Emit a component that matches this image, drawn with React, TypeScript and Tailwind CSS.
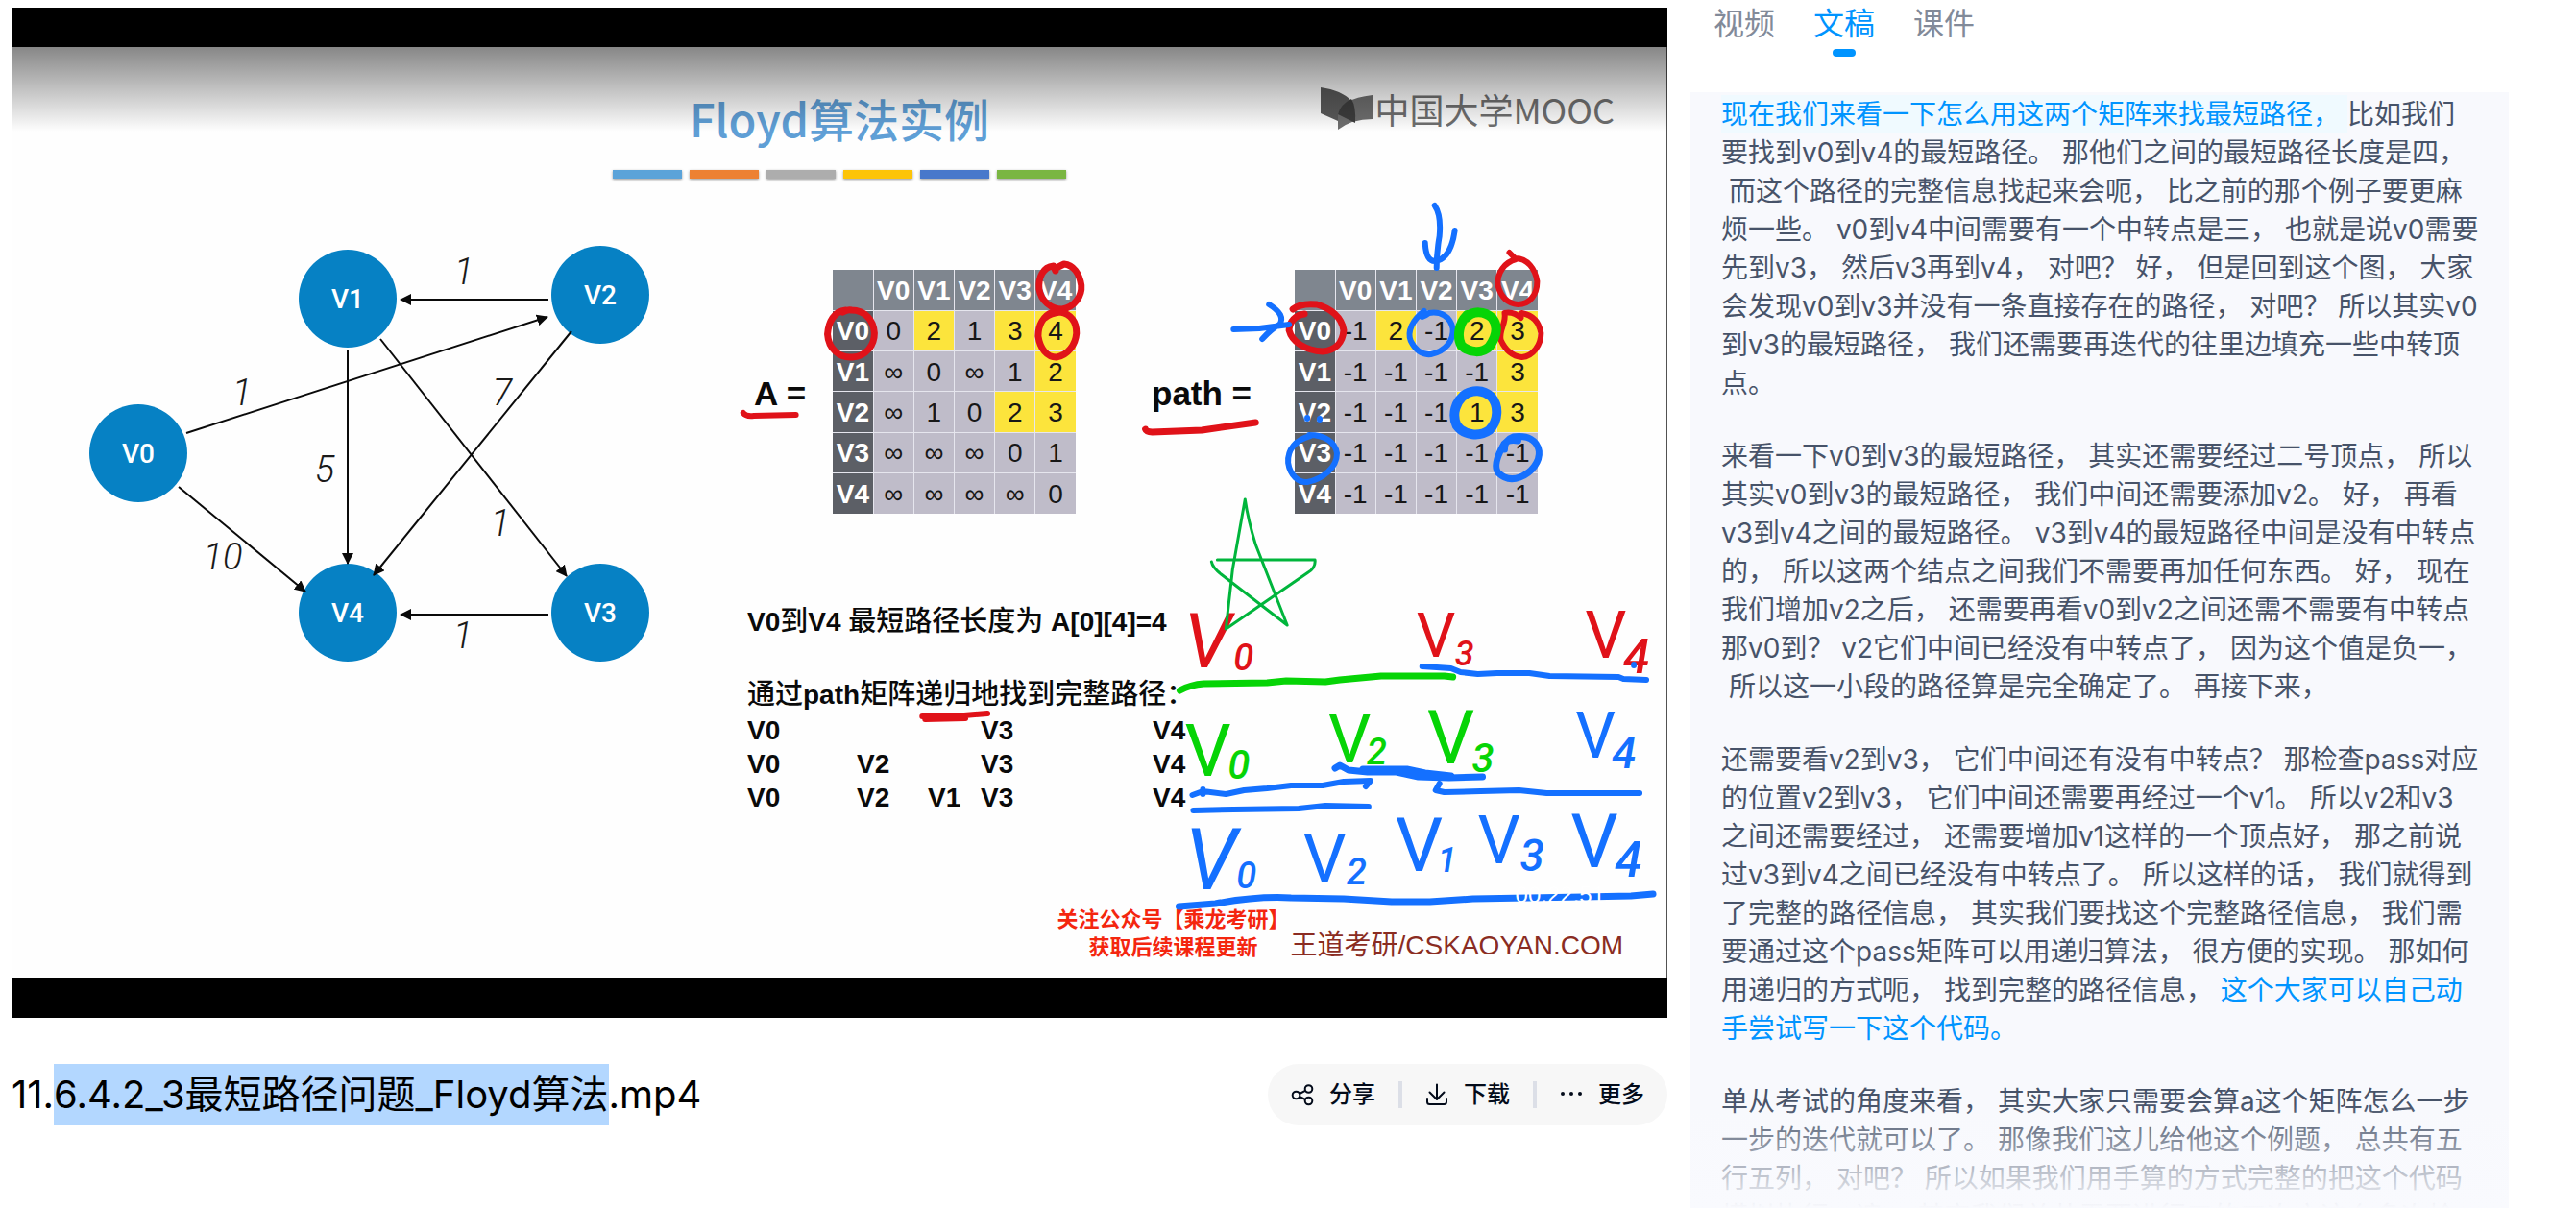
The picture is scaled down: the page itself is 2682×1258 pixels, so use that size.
import React from "react";

type Row = { head: string; cells: string[]; marked: number[] };

const HEADS = ["V0", "V1", "V2", "V3", "V4"];

const DISTANCES: Row[] = [
  { head: "V0", cells: ["0", "2", "1", "3", "4"], marked: [1, 3, 4] },
  { head: "V1", cells: ["∞", "0", "∞", "1", "2"], marked: [4] },
  { head: "V2", cells: ["∞", "1", "0", "2", "3"], marked: [3, 4] },
  { head: "V3", cells: ["∞", "∞", "∞", "0", "1"], marked: [] },
  { head: "V4", cells: ["∞", "∞", "∞", "∞", "0"], marked: [] },
];

const PATHS: Row[] = [
  { head: "V0", cells: ["-1", "2", "-1", "2", "3"], marked: [1, 3, 4] },
  { head: "V1", cells: ["-1", "-1", "-1", "-1", "3"], marked: [4] },
  { head: "V2", cells: ["-1", "-1", "-1", "1", "3"], marked: [3, 4] },
  { head: "V3", cells: ["-1", "-1", "-1", "-1", "-1"], marked: [] },
  { head: "V4", cells: ["-1", "-1", "-1", "-1", "-1"], marked: [] },
];

const NODES = [
  { name: "V0", x: 144, y: 473 },
  { name: "V1", x: 362, y: 312 },
  { name: "V2", x: 625, y: 308 },
  { name: "V3", x: 625, y: 639 },
  { name: "V4", x: 362, y: 639 },
];

const EDGES = [
  { from: [571, 313], to: [417, 313], weight: "1", at: [483, 297] },
  { from: [194, 452], to: [570, 331], weight: "1", at: [252, 423] },
  { from: [595, 346], to: [389, 600], weight: "7", at: [523, 423] },
  { from: [362, 365], to: [362, 588], weight: "5", at: [338, 503] },
  { from: [396, 354], to: [590, 601], weight: "1", at: [521, 559] },
  { from: [186, 508], to: [318, 617], weight: "10", at: [232, 594] },
  { from: [571, 641], to: [417, 641], weight: "1", at: [482, 676] },
];

const RED = "#e01219";
const BLUE = "#1470ff";
const GREEN = "#06d406";

const NOTES = [
  { color: RED, tilt: true, x: 1233, y: 694, size: 80, sub: "0", sx: 1285, sy: 697, ss: 38 },
  { color: RED, tilt: false, x: 1476, y: 683, size: 64, sub: "3", sx: 1516, sy: 692, ss: 36 },
  { color: RED, tilt: false, x: 1652, y: 684, size: 68, sub: "4", sx: 1692, sy: 700, ss: 50 },
  { color: GREEN, tilt: false, x: 1234, y: 807, size: 76, sub: "0", sx: 1279, sy: 810, ss: 42 },
  { color: GREEN, tilt: false, x: 1384, y: 793, size: 70, sub: "2", sx: 1424, sy: 795, ss: 38 },
  { color: GREEN, tilt: false, x: 1487, y: 794, size: 78, sub: "3", sx: 1534, sy: 803, ss: 42 },
  { color: BLUE, tilt: false, x: 1642, y: 788, size: 66, sub: "4", sx: 1680, sy: 799, ss: 46 },
  { color: BLUE, tilt: true, x: 1234, y: 925, size: 88, sub: "0", sx: 1288, sy: 924, ss: 38 },
  { color: BLUE, tilt: false, x: 1358, y: 918, size: 70, sub: "2", sx: 1403, sy: 920, ss: 38 },
  { color: BLUE, tilt: false, x: 1454, y: 906, size: 78, sub: "1", sx: 1498, sy: 907, ss: 36 },
  { color: BLUE, tilt: false, x: 1540, y: 898, size: 70, sub: "3", sx: 1584, sy: 906, ss: 46 },
  { color: BLUE, tilt: false, x: 1637, y: 902, size: 78, sub: "4", sx: 1683, sy: 912, ss: 52 },
];

const STROKES = [
  { color: RED, width: 6, d: "M773 429Q776 433 784 432L828 431" },
  { color: RED, width: 7, d: "M880 322C868 323 862 334 861 347C862 362 873 372 887 371C902 370 910 358 910 346C909 332 900 322 886 322Q882 321 877 324" },
  { color: RED, width: 7, d: "M1099 281L1097 276C1086 277 1081 288 1082 300C1084 312 1094 321 1106 321C1119 319 1127 307 1126 296C1124 284 1118 275 1108 274L1098 279" },
  { color: RED, width: 7, d: "M1096 324C1086 328 1081 338 1081 349C1083 362 1090 371 1100 371C1112 369 1120 358 1121 346C1121 334 1115 326 1104 324Q1094 325 1088 330" },
  { color: RED, width: 7, d: "M1193 446Q1194 449 1200 449L1252 447L1308 439" },
  { color: RED, width: 7, d: "M1347 321C1353 316 1362 315 1372 316C1386 320 1398 329 1400 343C1399 356 1391 364 1378 365C1360 364 1346 355 1343 343C1343 334 1350 327 1359 326" },
  { color: RED, width: 6, d: "M1573 262L1580 269C1568 272 1560 283 1561 296C1564 308 1571 315 1582 316C1594 316 1602 306 1602 292C1600 279 1592 268 1579 268" },
  { color: RED, width: 6, d: "M1585 330Q1577 323 1568 325C1570 336 1562 342 1564 353C1569 364 1576 370 1586 371C1598 370 1606 358 1606 346C1604 334 1597 327 1586 325" },
  { color: RED, width: 6, d: "M960 745L992 745L1028 742M963 748L1005 747" },
  { color: BLUE, width: 6, d: "M1495 213Q1502 223 1500 245Q1497 262 1497 278M1485 252Q1486 272 1496 271Q1512 268 1516 239" },
  { color: BLUE, width: 6, d: "M1285 342L1312 341L1343 337M1322 316Q1340 327 1333 337Q1325 341 1315 352" },
  { color: BLUE, width: 6, d: "M1484 323C1472 332 1466 344 1470 354C1475 364 1482 369 1491 368C1506 365 1515 354 1514 341C1511 328 1501 323 1489 325Q1485 328 1482 329" },
  { color: GREEN, width: 10, d: "M1529 327C1520 336 1518 350 1523 359C1532 367 1545 367 1552 360C1560 349 1562 339 1555 330C1547 323 1535 322 1528 330" },
  { color: BLUE, width: 10, d: "M1528 409C1516 417 1513 431 1518 442C1526 453 1542 454 1552 447C1562 437 1562 421 1554 412C1546 405 1534 404 1525 411" },
  { color: BLUE, width: 6, d: "M1365 453C1350 457 1341 467 1342 481C1344 494 1353 502 1362 501C1378 498 1393 486 1393 471C1391 459 1380 452 1364 452" },
  { color: BLUE, width: 7, d: "M1582 458Q1569 456 1566 464C1560 475 1557 485 1561 491C1568 498 1576 499 1584 496C1597 491 1605 479 1604 469C1602 457 1592 452 1577 454Q1568 457 1568 467" },
  { color: BLUE, width: 6, d: "M1362 434V435M1375 435V436M1703 691V692" },
  { color: "#00b53c", width: 3, d: "M1297 519Q1300 540 1308 566L1341 650L1272 597Q1263 590 1262 584M1268 582H1370Q1371 590 1363 595L1277 654L1284 592L1297 519" },
  { color: GREEN, width: 7, d: "M1229 718Q1240 712 1254 711L1320 710L1340 708L1381 709L1396 707L1439 703L1505 703L1514 704" },
  { color: BLUE, width: 6, d: "M1482 693L1512 695L1522 699L1540 701L1560 700L1594 700L1615 703L1687 704L1692 706L1716 707" },
  { color: BLUE, width: 7, d: "M1391 799L1396 796L1405 801L1425 803L1455 803L1478 808L1510 809L1545 808M1420 800H1466L1485 804L1512 807" },
  { color: BLUE, width: 6, d: "M1242 827L1253 823L1277 826L1296 822L1320 820L1345 817L1378 817L1400 813L1428 812L1423 818M1253 821V826" },
  { color: BLUE, width: 6, d: "M1500 815L1496 822L1505 824L1543 823L1583 822L1612 825L1709 825" },
  { color: BLUE, width: 6, d: "M1243 843L1285 842L1353 841L1381 838L1426 839" },
  { color: BLUE, width: 7, d: "M1228 943L1266 940Q1310 932 1345 934L1400 935L1450 938L1490 938L1535 935L1650 933L1700 932L1723 930" },
];

function Matrix({ rows, label }: { rows: Row[]; label: string }) {
  return (
    <table
      aria-label={label}
      className="h-[254px] w-[253px] shrink-0 table-fixed border-collapse text-center text-[28px] leading-8"
    >
      <thead>
        <tr className="h-[42px] bg-[#7f868f] text-white">
          <td className="border-r border-b border-[#e6e6ee]" />
          {HEADS.map((h) => (
            <th key={h} scope="col" className="border-b border-l border-[#e6e6ee] p-0 pt-[2px] font-bold">
              {h}
            </th>
          ))}
        </tr>
      </thead>
      <tbody>
        {rows.map((r) => (
          <tr key={r.head} className="h-[42px]">
            <th scope="row" className="border-t border-r border-[#e6e6ee] bg-[#5c5f66] p-0 pt-[2px] font-bold text-white">
              {r.head}
            </th>
            {r.cells.map((c, i) => (
              <td
                key={i}
                className={
                  r.marked.includes(i)
                    ? "border-t border-l border-[#e6e6ee] bg-[#fce43c] p-0 pt-[2px] text-neutral-900"
                    : "border-t border-l border-[#e6e6ee] bg-[#bfbcc9] p-0 pt-[2px] text-neutral-900"
                }
              >
                {c}
              </td>
            ))}
          </tr>
        ))}
      </tbody>
    </table>
  );
}

function Graph() {
  return (
    <svg viewBox="13 187 708 640" className="w-[708px] shrink-0 self-start" role="img" aria-label="有向图">
      <defs>
        <marker id="tip" viewBox="0 0 12 12" refX="11" refY="6" markerWidth="12" markerHeight="12" markerUnits="userSpaceOnUse" orient="auto">
          <path d="M0 0L12 6L0 12Z" fill="#0a0a0a" />
        </marker>
      </defs>
      {NODES.map((n) => (
        <g key={n.name}>
          <circle cx={n.x} cy={n.y} r="51" fill="#0681c4" />
          <text x={n.x} y={n.y + 10} textAnchor="middle" fill="#fff" className="font-['Roboto'] text-[28px] font-medium">
            {n.name}
          </text>
        </g>
      ))}
      {EDGES.map((e, i) => (
        <g key={i}>
          <path
            d={`M${e.from[0]} ${e.from[1]}L${e.to[0]} ${e.to[1]}`}
            stroke="#0a0a0a"
            strokeWidth="2"
            fill="none"
            markerEnd="url(#tip)"
          />
          <text x={e.at[0]} y={e.at[1]} textAnchor="middle" fill="#1a1a1a" className="font-['Roboto'] text-[38px] font-light italic">
            {e.weight}
          </text>
        </g>
      ))}
    </svg>
  );
}

function Ink() {
  return (
    <svg
      viewBox="10 48 1727 970"
      preserveAspectRatio="none"
      className="pointer-events-none absolute inset-0 h-full w-full"
      aria-hidden="true"
    >
      {NOTES.map((n, i) => (
        <g key={i} fill={n.color} className="font-['Roboto'] font-medium">
          <text x={n.x} y={n.y} fontSize={n.size} className={n.tilt ? "font-normal italic" : "font-normal"}>
            V
          </text>
          <text x={n.sx} y={n.sy} fontSize={n.ss} className="italic">
            {n.sub}
          </text>
        </g>
      ))}
      {STROKES.map((s, i) => (
        <path key={i} d={s.d} stroke={s.color} strokeWidth={s.width} fill="none" strokeLinecap="round" strokeLinejoin="round" />
      ))}
    </svg>
  );
}

function MoocLogo() {
  return (
    <div className="mt-[42px] flex items-center gap-[2px] self-start justify-self-end pr-[54px] text-[#6f6f6f]">
      <svg viewBox="0 0 54 44" className="h-11 w-[54px]" aria-hidden="true">
        <path d="M0 0Q22 3 32 14Q18 22 18 35L0 27Z" fill="#5a5a5a" />
        <path d="M54 8V33Q32 33 18 44V29Q20 12 54 8Z" fill="#6e6e6e" />
        <path d="M32 12Q37 20 36 37L18 28Q20 18 32 12Z" fill="#3d3d3d" />
      </svg>
      <span className="text-[36px] leading-[40px] font-normal">中国大学MOOC</span>
    </div>
  );
}

function Slide() {
  return (
    <div className="relative flex aspect-[1724/970] flex-col overflow-hidden border-x border-neutral-600 bg-[#fefefe] font-['Liberation_Sans','Noto_Sans_CJK_SC',sans-serif] text-[28px] text-neutral-950">
      <header className="grid grid-cols-[1fr_auto_1fr] font-['Noto_Sans_CJK_SC',sans-serif]">
        <span />
        <h2 className="mt-11 text-[47px] leading-[60px] font-medium text-[#5f9fd6]">Floyd算法实例</h2>
        <MoocLogo />
      </header>
      <div className="mt-6 flex justify-center gap-2">
        <i className="h-[9px] w-[72px] bg-[#5ba3d9] shadow-sm shadow-neutral-400" />
        <i className="h-[9px] w-[72px] bg-[#ed8133] shadow-sm shadow-neutral-400" />
        <i className="h-[9px] w-[72px] bg-[#adadad] shadow-sm shadow-neutral-400" />
        <i className="h-[9px] w-[72px] bg-[#fdc408] shadow-sm shadow-neutral-400" />
        <i className="h-[9px] w-[72px] bg-[#4878cb] shadow-sm shadow-neutral-400" />
        <i className="h-[9px] w-[72px] bg-[#7ab642] shadow-sm shadow-neutral-400" />
      </div>

      <div className="flex">
        <Graph />
        <section className="pt-[95px] pl-[57px]">
          <div className="flex items-center pl-[7px]">
            <b className="w-[82px] pt-1 text-[35px]">A =</b>
            <Matrix rows={DISTANCES} label="A" />
            <b className="ml-[79px] w-[149px] pt-1 text-[35px]">path =</b>
            <Matrix rows={PATHS} label="path" />
          </div>
          <p className="mt-[94px] text-[29px] leading-9 font-medium whitespace-pre">
            <b className="text-[28px]">V0</b>到<b className="text-[28px]">V4 </b>最短路径长度为
            <b className="text-[28px]"> A[0][4]=4</b>
          </p>
          <p className="mt-[39px] text-[29px] leading-9 font-medium whitespace-nowrap">
            通过<b className="text-[28px]">path</b>矩阵递归地找到完整路径：
          </p>
          <div className="mt-px grid grid-cols-[114px_74px_55px_179px_auto] leading-[35px] font-bold">
            <span>V0</span>
            <span />
            <span />
            <span>V3</span>
            <span>V4</span>
            <span>V0</span>
            <span>V2</span>
            <span />
            <span>V3</span>
            <span>V4</span>
            <span>V0</span>
            <span>V2</span>
            <span>V1</span>
            <span>V3</span>
            <span>V4</span>
          </div>
        </section>
      </div>

      <footer className="absolute right-[45px] bottom-[18px] flex items-end gap-px whitespace-nowrap">
        <p className="text-center text-[22px] leading-[29px] font-bold text-[#f4260f]">
          关注公众号【乘龙考研】
          <br />
          获取后续课程更新
        </p>
        <p className="leading-8 text-[#8a2c22]">王道考研/CSKAOYAN.COM</p>
      </footer>
      <Ink />
      <time className="absolute right-[64px] bottom-[73px] text-2xl leading-7 text-white">00:22:51</time>
    </div>
  );
}

function ShareIcon() {
  return (
    <svg viewBox="0 0 24 24" className="size-6" fill="none" stroke="currentColor" strokeWidth="2" aria-hidden="true">
      <circle cx="5.5" cy="12.5" r="3.8" />
      <circle cx="18.5" cy="6" r="3.8" />
      <circle cx="18.5" cy="18.5" r="3.8" />
      <path d="M9 11L15 7.800M9 14L15 17" />
    </svg>
  );
}

function DownloadIcon() {
  return (
    <svg viewBox="0 0 24 24" className="size-6" fill="none" stroke="currentColor" strokeWidth="2" strokeLinecap="round" strokeLinejoin="round" aria-hidden="true">
      <path d="M12 1.500V16.500M4.500 9.500L12 17L19.500 9.500M2 16V19.500Q2 22 4.500 22H19.500Q22 22 22 19.500V16" />
    </svg>
  );
}

function MoreIcon() {
  return (
    <svg viewBox="0 0 24 24" className="size-6" fill="currentColor" aria-hidden="true">
      <circle cx="3" cy="11" r="2" />
      <circle cx="12" cy="11" r="2" />
      <circle cx="21" cy="11" r="2" />
    </svg>
  );
}

function Action({ icon, label }: { icon: React.ReactNode; label: string }) {
  return (
    <button type="button" className="flex h-full items-center gap-4 px-6">
      {icon}
      {label}
    </button>
  );
}

function Player() {
  return (
    <main className="min-w-0 flex-1 pt-2 pl-3">
      <div className="relative bg-black py-[41px]">
        <Slide />
        <div className="pointer-events-none absolute inset-x-0 top-[41px] h-[88px] bg-linear-to-b from-black/47 to-transparent" />
      </div>
      <div className="mt-12 flex items-center justify-between">
        <h1 className="text-[40px] leading-[64px] whitespace-nowrap text-black">
          11.
          <mark className="inline-block bg-[#b3d7ff] text-black">6.4.2_3最短路径问题_Floyd算法</mark>
          .mp4
        </h1>
        <div className="flex h-16 items-center rounded-full bg-[#f7f7f7] text-2xl font-medium text-[#030b1a]">
          <Action icon={<ShareIcon />} label="分享" />
          <span className="h-7 w-1 bg-[#dcdfe7]" />
          <Action icon={<DownloadIcon />} label="下载" />
          <span className="h-7 w-1 bg-[#dcdfe7]" />
          <Action icon={<MoreIcon />} label="更多" />
        </div>
      </div>
    </main>
  );
}

function Transcript() {
  return (
    <aside className="flex w-[852px] shrink-0 flex-col">
      <div role="tablist" className="flex h-24 items-start gap-10 pl-6 text-[32px] leading-[50px] text-[#828a99]">
        <button type="button" role="tab" aria-selected="false">
          视频
        </button>
        <button type="button" role="tab" aria-selected="true" className="flex flex-col items-center text-[#0094ff]">
          文稿
          <span className="mt-px h-2 w-6 rounded-full bg-[#0094ff]" />
        </button>
        <button type="button" role="tab" aria-selected="false">
          课件
        </button>
      </div>
      <div className="relative min-h-0 flex-1 overflow-hidden bg-[#f8f9fd] px-8 pt-[3px]">
        <div className="space-y-9 text-[28px] leading-10 whitespace-pre text-[#475369]">
          <p>
            <span className="inline-block bg-[#f0faff] text-[#0094ff]">现在我们来看一下怎么用这两个矩阵来找最短路径， </span>
            {`比如我们
要找到v0到v4的最短路径。 那他们之间的最短路径长度是四，
 而这个路径的完整信息找起来会呃， 比之前的那个例子要更麻
烦一些。 v0到v4中间需要有一个中转点是三， 也就是说v0需要
先到v3， 然后v3再到v4， 对吧？ 好， 但是回到这个图， 大家
会发现v0到v3并没有一条直接存在的路径， 对吧？ 所以其实v0
到v3的最短路径， 我们还需要再迭代的往里边填充一些中转顶
点。`}
          </p>
          <p>{`来看一下v0到v3的最短路径， 其实还需要经过二号顶点， 所以
其实v0到v3的最短路径， 我们中间还需要添加v2。 好， 再看
v3到v4之间的最短路径。 v3到v4的最短路径中间是没有中转点
的， 所以这两个结点之间我们不需要再加任何东西。 好， 现在
我们增加v2之后， 还需要再看v0到v2之间还需不需要有中转点
那v0到？ v2它们中间已经没有中转点了， 因为这个值是负一，
 所以这一小段的路径算是完全确定了。 再接下来，`}</p>
          <p>
            {`还需要看v2到v3， 它们中间还有没有中转点？ 那检查pass对应
的位置v2到v3， 它们中间还需要再经过一个v1。 所以v2和v3
之间还需要经过， 还需要增加v1这样的一个顶点好， 那之前说
过v3到v4之间已经没有中转点了。 所以这样的话， 我们就得到
了完整的路径信息， 其实我们要找这个完整路径信息， 我们需
要通过这个pass矩阵可以用递归算法， 很方便的实现。 那如何
用递归的方式呃， 找到完整的路径信息， `}
            <span className="text-[#0094ff]">{`这个大家可以自己动
手尝试写一下这个代码。`}</span>
          </p>
          <p>{`单从考试的角度来看， 其实大家只需要会算a这个矩阵怎么一步
一步的迭代就可以了。 那像我们这儿给他这个例题， 总共有五
行五列， 对吧？ 所以如果我们用手算的方式完整的把这个代码
模拟执行一遍， 其实我们总共需要进行五的三次方这么多次检`}</p>
        </div>
        <div className="absolute inset-x-0 bottom-0 h-[108px] bg-linear-to-b from-[#f8f9fd]/0 to-[#f9fafe]" />
      </div>
    </aside>
  );
}

export default function App() {
  return (
    <div className="flex h-screen gap-6 overflow-hidden bg-white pr-[70px] font-['Inter','Noto_Sans_CJK_SC',sans-serif]">
      <Player />
      <Transcript />
    </div>
  );
}
